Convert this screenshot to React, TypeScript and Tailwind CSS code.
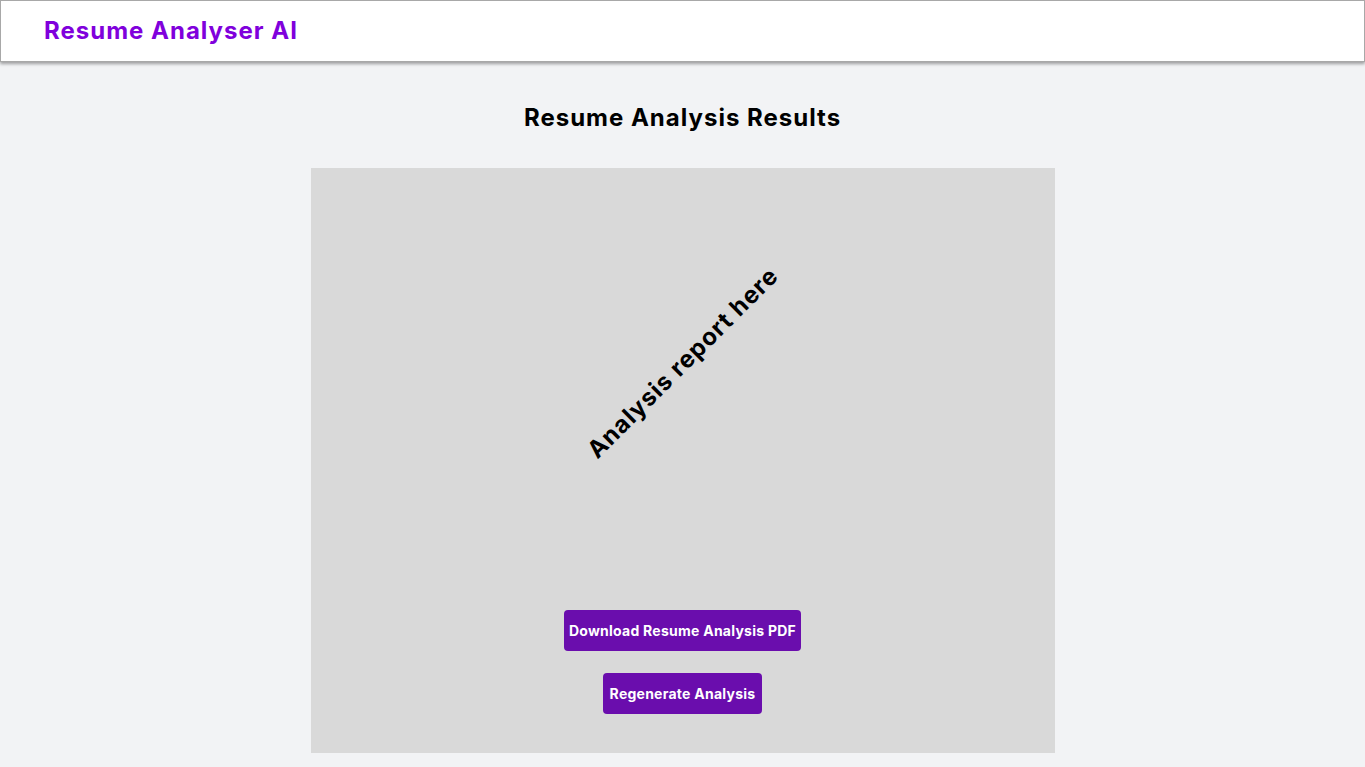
export default function App() {
  return (
    <div className="min-h-screen bg-[#f2f3f5] font-['Inter','Noto_Sans',sans-serif]">
      <header className="flex h-[62px] items-center border border-[#a8a8a8] bg-white pl-[43px] shadow-[0_2px_3px_rgba(0,0,0,0.35)]">
        <h1 className="text-[24px] font-bold leading-8 tracking-[1px] text-[#8000dc]">Resume Analyser AI</h1>
      </header>

      <main className="flex flex-col items-center pb-[14px]">
        <h2 className="mt-[40px] text-[24px] font-bold leading-8 tracking-[1px] text-black">Resume Analysis Results</h2>

        <section className="mt-[34px] flex h-[585px] w-[744px] flex-col items-center bg-[#d9d9d9]">
          <div className="flex h-[390px] w-full items-center justify-center">
            <p className="-rotate-45 text-[24px] font-bold leading-8 tracking-[1px] text-black">Analysis report here</p>
          </div>
          <button
            type="button"
            className="mt-[52px] h-[41px] rounded-[4px] bg-[#6a0dad] px-[5px] text-[14px] font-bold tracking-[0.25px] text-white"
          >
            Download Resume Analysis PDF
          </button>
          <button
            type="button"
            className="mt-[22px] h-[41px] rounded-[4px] bg-[#6a0dad] px-[7px] text-[14px] font-bold tracking-[0.25px] text-white"
          >
            Regenerate Analysis
          </button>
        </section>
      </main>
    </div>
  );
}
